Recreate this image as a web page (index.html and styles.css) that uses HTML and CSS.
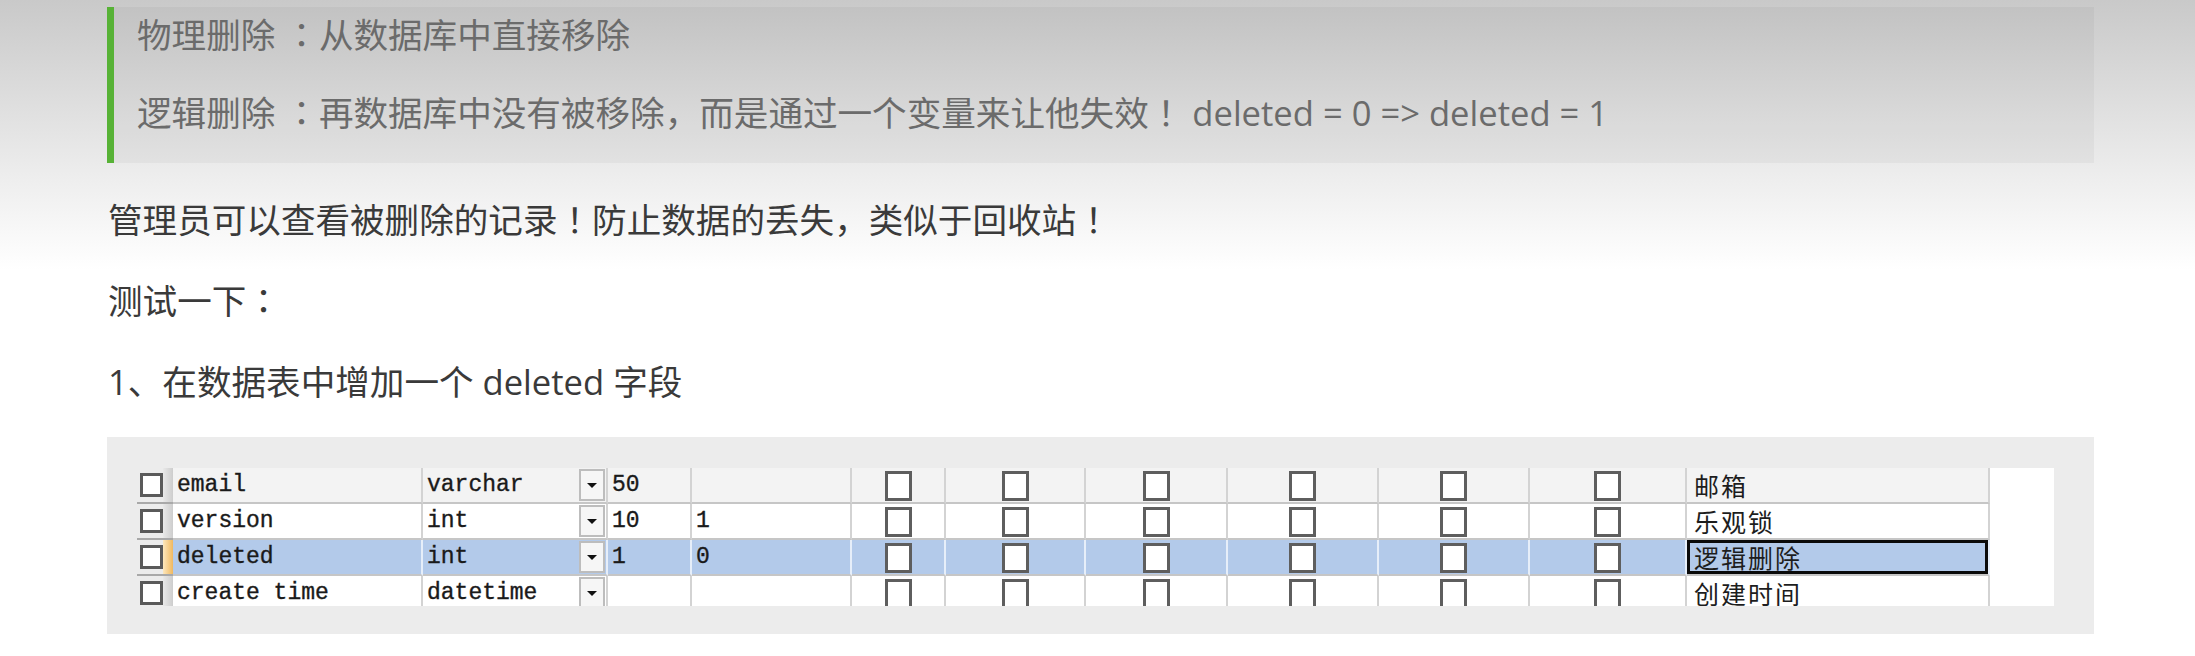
FILE: index.html
```html
<!DOCTYPE html>
<html lang="zh-CN">
<head>
<meta charset="utf-8">
<title>逻辑删除</title>
<link rel="stylesheet" href="styles.css">
</head>
<body>
<div class="page">
  <blockquote class="note">
    <p>物理删除 <span class="pn" lang="ja">：</span>从数据库中直接移除</p>
    <p>逻辑删除 <span class="pn" lang="ja">：</span>再数据库中没有被移除<span class="pn" lang="ja">，</span>而是通过一个变量来让他失效<span class="pn" lang="ja">！</span> deleted = 0 =&gt; deleted = 1</p>
  </blockquote>
  <p class="txt">管理员可以查看被删除的记录<span class="pn" lang="ja">！</span>防止数据的丢失<span class="pn" lang="ja">，</span>类似于回收站<span class="pn" lang="ja">！</span></p>
  <p class="txt">测试一下<span class="pn" lang="ja">：</span></p>
  <p class="txt">1、在数据表中增加一个 deleted 字段</p>
  <div class="shot">
    <div class="grid">
      <div class="row r-gray">
        <div class="c hdr"><span class="box"></span><span class="strip"></span></div>
        <div class="c mono">email</div>
        <div class="c mono type"><span>varchar</span><span class="dd"><i></i></span></div>
        <div class="c mono">50</div>
        <div class="c mono"></div>
        <div class="c cb"><span class="cbox"></span></div>
        <div class="c cb"><span class="cbox"></span></div>
        <div class="c cb"><span class="cbox"></span></div>
        <div class="c cb"><span class="cbox"></span></div>
        <div class="c cb"><span class="cbox"></span></div>
        <div class="c cb"><span class="cbox"></span></div>
        <div class="c cmt">邮箱</div>
        <div class="c fill"></div>
      </div>
      <div class="row">
        <div class="c hdr"><span class="box"></span><span class="strip"></span></div>
        <div class="c mono">version</div>
        <div class="c mono type"><span>int</span><span class="dd"><i></i></span></div>
        <div class="c mono">10</div>
        <div class="c mono">1</div>
        <div class="c cb"><span class="cbox"></span></div>
        <div class="c cb"><span class="cbox"></span></div>
        <div class="c cb"><span class="cbox"></span></div>
        <div class="c cb"><span class="cbox"></span></div>
        <div class="c cb"><span class="cbox"></span></div>
        <div class="c cb"><span class="cbox"></span></div>
        <div class="c cmt">乐观锁</div>
        <div class="c fill"></div>
      </div>
      <div class="row r-sel">
        <div class="c hdr"><span class="box"></span><span class="strip"></span></div>
        <div class="c mono">deleted</div>
        <div class="c mono type"><span>int</span><span class="dd"><i></i></span></div>
        <div class="c mono">1</div>
        <div class="c mono">0</div>
        <div class="c cb"><span class="cbox"></span></div>
        <div class="c cb"><span class="cbox"></span></div>
        <div class="c cb"><span class="cbox"></span></div>
        <div class="c cb"><span class="cbox"></span></div>
        <div class="c cb"><span class="cbox"></span></div>
        <div class="c cb"><span class="cbox"></span></div>
        <div class="c cmt focus">逻辑删除</div>
        <div class="c fill"></div>
      </div>
      <div class="row">
        <div class="c hdr"><span class="box"></span><span class="strip"></span></div>
        <div class="c mono">create time</div>
        <div class="c mono type"><span>datetime</span><span class="dd"><i></i></span></div>
        <div class="c mono"></div>
        <div class="c mono"></div>
        <div class="c cb"><span class="cbox"></span></div>
        <div class="c cb"><span class="cbox"></span></div>
        <div class="c cb"><span class="cbox"></span></div>
        <div class="c cb"><span class="cbox"></span></div>
        <div class="c cb"><span class="cbox"></span></div>
        <div class="c cb"><span class="cbox"></span></div>
        <div class="c cmt">创建时间</div>
        <div class="c fill"></div>
      </div>
    </div>
  </div>
</div>
</body>
</html>
```

FILE: styles.css
```css
html, body {
  margin: 0;
  padding: 0;
}
body {
  background: linear-gradient(to bottom, #c9c9c9 0px, #eeeeee 180px, #ffffff 270px, #ffffff 100%);
  min-height: 656px;
  font-family: "Open Sans", "Noto Sans CJK SC", sans-serif;
  overflow: hidden;
}
.page {
  margin-left: 107px;
  width: 1987px;
  padding-top: 7px;
}
.note {
  margin: 0;
  height: 156px;
  box-sizing: border-box;
  border-left: 7px solid #57b236;
  background: rgba(0, 0, 0, 0.035);
  padding: 8px 0 0 23px;
}
.note p {
  margin: 0 0 38px 0;
  height: 40px;
  font-size: 34.6px;
  line-height: 40px;
  color: #6b6b6b;
  white-space: nowrap;
}
.pn {
  font-family: "Noto Sans CJK JP", "Noto Sans CJK SC", sans-serif;
  line-height: 0;
}
.txt {
  margin: 37px 0 0 1px;
  height: 40px;
  font-size: 34.6px;
  line-height: 40px;
  color: #3a3a3a;
  white-space: nowrap;
}
.txt + .txt {
  margin-top: 41px;
}
.shot {
  margin-top: 35px;
  background: #ececec;
  height: 197px;
  box-sizing: border-box;
  padding: 31px 0 0 30px;
}
.grid {
  width: 1917px;
  height: 138px;
  overflow: hidden;
  background: #ffffff;
}
.row {
  display: grid;
  grid-template-columns: 36px 250px 185px 84px 160px 94px 140px 142px 151px 151px 157px 303px 64px;
  height: 36px;
}
.c {
  box-sizing: border-box;
  border-right: 2px solid #d3d3d3;
  border-bottom: 2px solid #c6c6c6;
  height: 36px;
  overflow: hidden;
}
.r-gray .c {
  background: #f3f3f3;
}
.r-sel .c {
  background: #b3caea;
  border-right-color: #e6eef9;
}
.mono {
  font-family: "Liberation Mono", monospace;
  font-size: 23px;
  line-height: 34px;
  color: #1a1a1a;
  -webkit-text-stroke: 0.35px #1a1a1a;
  padding-left: 4px;
  white-space: pre;
}
.type {
  display: flex;
  justify-content: space-between;
  align-items: center;
  padding-right: 1px;
}
.dd {
  width: 26px;
  height: 32px;
  box-sizing: border-box;
  border: 2px solid #bdbdbd;
  background: #f6f6f6;
  display: flex;
  align-items: center;
  justify-content: center;
}
.dd i {
  width: 0;
  height: 0;
  border-left: 5px solid transparent;
  border-right: 5px solid transparent;
  border-top: 5px solid #111;
}
.hdr {
  display: flex;
  align-items: center;
  border-right: 0;
  border-bottom: 2px solid #a9a9a9;
  background: #ececec;
  padding-left: 3px;
}
.r-gray .hdr, .r-sel .hdr {
  background: #ececec;
}
.box {
  width: 23px;
  height: 24px;
  box-sizing: border-box;
  border: 3px solid #5a5a5a;
  background: #ffffff;
  flex: none;
}
.strip {
  flex: 1;
  align-self: stretch;
  background: linear-gradient(to right, #e9e9e9, #cdcdcd);
}
.r-sel .strip {
  background: linear-gradient(to right, #fde8bd, #f0b860);
}
.cb {
  display: flex;
  justify-content: center;
  align-items: center;
}
.cbox {
  width: 27px;
  height: 30px;
  box-sizing: border-box;
  border: 3px solid #5e5e5e;
  background: #ffffff;
  margin-top: 1px;
}
.cmt {
  font-family: "Noto Sans CJK SC", sans-serif;
  font-size: 25px;
  line-height: 34px;
  color: #1d1d1d;
  padding-left: 7px;
  letter-spacing: 2px;
}
.focus {
  box-shadow: inset 0 0 0 3px #0a0a0a;
}
.fill, .r-gray .fill, .r-sel .fill {
  background: #ffffff;
  border: 0;
}
```
